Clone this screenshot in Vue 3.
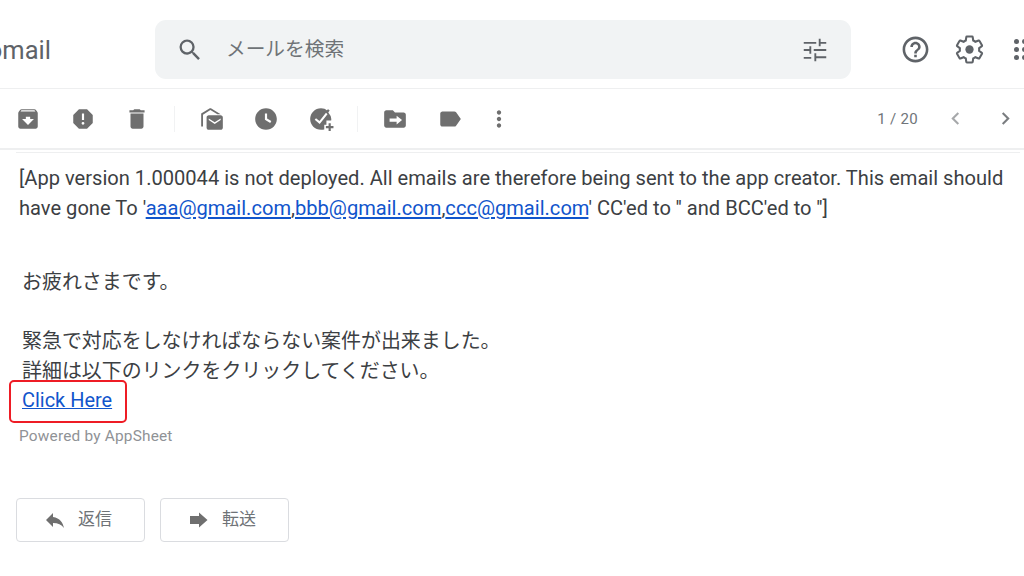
<template>
  <div class="page">
    <header class="topbar">
      <div class="logo"><span>omail</span></div>
      <div class="search">
        <svg class="search-icon" viewBox="0 0 24 24"><path d="M15.5 14h-.79l-.28-.27A6.471 6.471 0 0 0 16 9.5 6.5 6.5 0 1 0 9.5 16c1.61 0 3.09-.59 4.23-1.57l.27.28v.79l5 4.99L20.49 19l-4.99-5zm-6 0C7.01 14 5 11.99 5 9.5S7.01 5 9.5 5 14 7.01 14 9.5 11.99 14 9.5 14z" /></svg>
        <span class="search-text">メールを検索</span>
        <svg class="tune-icon" viewBox="0 0 24 24"><path d="M3 17.500v1.500h6v-1.500H3zM3 5.500V7h10V5.500H3zm10 15.500v-2.500h8V17h-8v-2.500h-1.500V21H13zM7.500 9v2.250H3v1.500h4.500V15H9V9H7.500zM21 12.750v-1.500H11v1.500h10zM15 9h1.500V7H21V5.500h-4.500V3H15v6z" /></svg>
      </div>
      <div class="top-actions">
        <svg class="top-icon help" viewBox="0 0 24 24"><path d="M11 18h2v-2h-2v2zm1-16C6.48 2 2 6.48 2 12s4.48 10 10 10 10-4.48 10-10S17.52 2 12 2zm0 18c-4.41 0-8-3.59-8-8s3.59-8 8-8 8 3.59 8 8-3.59 8-8 8zm0-14c-2.21 0-4 1.79-4 4h2c0-1.1.9-2 2-2s2 .9 2 2c0 2-3 1.75-3 5h2c0-2.25 3-2.5 3-5 0-2.21-1.79-4-4-4z" /></svg>
        <svg class="top-icon gear" viewBox="0 0 24 24">
          <path class="gear-line" d="M19.43 12.98c.04-.32.07-.64.07-.98s-.03-.66-.07-.98l2.11-1.65c.19-.15.24-.42.12-.64l-2-3.46c-.12-.22-.39-.3-.61-.22l-2.49 1c-.52-.4-1.08-.73-1.69-.98l-.38-2.65A.488.488 0 0 0 14 2h-4c-.25 0-.46.18-.49.42l-.38 2.65c-.61.25-1.17.59-1.69.98l-2.49-1c-.23-.09-.49 0-.61.22l-2 3.46c-.13.22-.07.49.12.64l2.11 1.65c-.04.32-.07.65-.07.98s.03.66.07.98l-2.11 1.65c-.19.15-.24.42-.12.64l2 3.46c.12.22.39.3.61.22l2.49-1c.52.4 1.08.73 1.69.98l.38 2.65c.03.24.24.42.49.42h4c.25 0 .46-.18.49-.42l.38-2.65c.61-.25 1.17-.59 1.69-.98l2.49 1c.23.09.49 0 .61-.22l2-3.46c.12-.22.07-.49-.12-.64l-2.11-1.65z" />
          <circle cx="12" cy="12" r="3.2" />
        </svg>
        <div class="apps"><i v-for="n in 9" :key="n"></i></div>
      </div>
    </header>

    <div class="toolbar">
      <template v-for="(item, i) in tools" :key="i">
        <span v-if="item === 'sep'" class="sep"></span>
        <button v-else class="tool" :class="{ narrow: item.narrow }">
          <svg viewBox="0 0 24 24"><path :d="item.d" fill-rule="evenodd" /></svg>
        </button>
      </template>
      <div class="pager">
        <span class="count">1 / 20</span>
        <svg class="chev prev" viewBox="0 0 24 24"><path d="M15.41 7.41 14 6l-6 6 6 6 1.41-1.41L10.83 12z" /></svg>
        <svg class="chev next" viewBox="0 0 24 24"><path d="M8.59 16.59 10 18l6-6-6-6-1.41 1.41L13.17 12z" /></svg>
      </div>
    </div>

    <main class="mail">
      <p class="notice">
        [App version 1.000044 is not deployed. All emails are therefore being sent to the app creator. This email should
        have gone To '<a href="#">aaa@gmail.com</a>,<a href="#">bbb@gmail.com</a>,<a href="#">ccc@gmail.com</a>' CC'ed to '' and BCC'ed to '']
      </p>
      <div class="message">
        <p>お疲れさまです。</p>
        <p class="blank">&nbsp;</p>
        <p>緊急で対応をしなければならない案件が出来ました。</p>
        <p>詳細は以下のリンクをクリックしてください。</p>
        <p class="link-line">
          <a href="#">Click Here</a>
          <span class="highlight"></span>
        </p>
      </div>
      <div class="powered">Powered by AppSheet</div>
      <div class="actions">
        <button class="action">
          <svg viewBox="0 0 24 24"><path d="M10 9V5l-7 7 7 7v-4.1c5 0 8.5 1.6 11 5.1-1-5-4-10-11-11z" /></svg>
          <span>返信</span>
        </button>
        <button class="action">
          <svg viewBox="0 0 24 24"><path d="M12 4.500 20.500 12 12 19.500V16H3V8h9z" /></svg>
          <span>転送</span>
        </button>
      </div>
    </main>
  </div>
</template>

<script setup>
const tools = [
  { d: 'M20.54 5.23 19.15 3.55C18.88 3.21 18.47 3 18 3H6c-.47 0-.88.21-1.16.55L3.46 5.23C3.17 5.57 3 6.02 3 6.5V19c0 1.1.9 2 2 2h14c1.1 0 2-.9 2-2V6.5c0-.48-.17-.93-.46-1.27zM12 17.5 6.5 12H10v-2h4v2h3.5L12 17.5zM5.12 5l.81-1h12l.94 1H5.12z' },
  { d: 'M15.73 3H8.27L3 8.27v7.46L8.27 21h7.46L21 15.73V8.27L15.73 3zM12 17.3c-.72 0-1.3-.58-1.3-1.3 0-.72.58-1.3 1.3-1.3.72 0 1.3.58 1.3 1.3 0 .72-.58 1.3-1.3 1.3zm1-4.3h-2V7h2v6z' },
  { d: 'M6 19c0 1.1.9 2 2 2h8c1.1 0 2-.9 2-2V7H6v12zM19 4h-3.5l-1-1h-5l-1 1H5v2h14V4z' },
  'sep',
  { d: 'M10 2 2 7v12h1.700V8l6.800-4.200L17 7.500h3L11 2h-1zM7 10.500V20c0 1.100.9 2 2 2h11c1.100 0 2-.9 2-2v-9.500c0-1.100-.9-2-2-2H9c-1.100 0-2 .9-2 2zm2 1 5.500 3.500 5.500-3.500V13l-5.500 3.500L9 13v-1.500z' },
  { d: 'M12 2C6.48 2 2 6.48 2 12s4.48 10 10 10 10-4.48 10-10S17.52 2 12 2zm-1 5h2v4.6l3.9 2.3-1 1.7L11 12.7V7z' },
  { d: 'M18.600 3 20 4.200l-1.300 1.700A10 10 0 0 1 21.500 12c0 .5 0 .9-.1 1.300H17v4h-2v4.300c-1 .3-2 .4-3 .4C6.480 22 2 17.520 2 12S6.480 2 12 2c2.400 0 4.500.8 5.200 1.900zM10.800 16.500 18 7.500 16.600 6.300l-6 7.600-3.200-2.700-1.200 1.400 4.600 3.900zM19 16v2.500h-2.500v2H19V23h2v-2.500h2.500v-2H21V16h-2z' },
  'sep',
  { d: 'M20 6h-8l-2-2H4c-1.100 0-2 .9-2 2v12c0 1.100.9 2 2 2h16c1.100 0 2-.9 2-2V8c0-1.100-.9-2-2-2zm-6.500 11v-2.500H7v-3h6.500V9l5 4-5 4z' },
  { d: 'M17.630 5.840C17.270 5.330 16.670 5 16 5L5 5.010C3.900 5.010 3 5.900 3 7v10c0 1.100.9 1.990 2 1.990L16 19c.67 0 1.270-.33 1.630-.84L22 12l-4.370-6.160z' },
  { narrow: true, d: 'M12 8c1.100 0 2-.9 2-2s-.9-2-2-2-2 .9-2 2 .9 2 2 2zm0 2c-1.100 0-2 .9-2 2s.9 2 2 2 2-.9 2-2-.9-2-2-2zm0 6c-1.100 0-2 .9-2 2s.9 2 2 2 2-.9 2-2-.9-2-2-2z' }
]
</script>

<style scoped>
.page {
  width: 1024px;
  height: 576px;
  overflow: hidden;
  background: #fff;
  font-family: Roboto, "Noto Sans CJK JP", sans-serif;
  color: #3c4043;
}

.topbar {
  height: 88px;
  display: flex;
  align-items: flex-start;
  border-bottom: 1px solid #eeeff0;
}

.logo {
  width: 155px;
  height: 88px;
  display: flex;
  align-items: center;
  justify-content: flex-end;
  box-sizing: border-box;
  padding: 12px 104px 0 0;
  font-size: 25.500px;
  color: #5f6368;
  flex: none;
}

.search {
  width: 696px;
  height: 59px;
  margin-top: 20px;
  background: #f1f3f4;
  border-radius: 11px;
  display: flex;
  align-items: center;
  flex: none;
  box-sizing: border-box;
  padding: 0 21px 0 21px;
}

.search-icon {
  width: 28px;
  height: 28px;
  fill: #5f6368;
}

.search-text {
  margin-left: 22px;
  font-size: 19.700px;
  color: #6f7377;
  flex: 1;
  margin-top: -4px;
}

.tune-icon {
  width: 30px;
  height: 30px;
  fill: #5f6368;
}

.top-actions {
  display: flex;
  align-items: center;
  height: 98px;
  padding-left: 49px;
  flex: none;
}

.top-icon {
  width: 31px;
  height: 31px;
  fill: #5f6368;
  flex: none;
}

.gear {
  margin-left: 23px;
}

.gear-line {
  fill: none;
  stroke: #5f6368;
  stroke-width: 1.600;
}

.apps {
  display: grid;
  grid-template-columns: repeat(3, 5px);
  gap: 3px;
  margin-left: 29px;
  flex: none;
}

.apps i {
  width: 5px;
  height: 5px;
  border-radius: 50%;
  background: #5f6368;
}

.toolbar {
  height: 59px;
  display: flex;
  align-items: center;
  padding-left: 1px;
  border-bottom: 2px solid #eeeff0;
}

.tool {
  width: 54.5px;
  height: 40px;
  flex: none;
  padding: 0;
  border: none;
  background: none;
  display: flex;
  align-items: center;
  justify-content: center;
}

.tool.narrow {
  width: 44px;
}

.tool svg {
  width: 26px;
  height: 26px;
  fill: #6f6f6f;
}

.sep {
  width: 1px;
  height: 26px;
  background: #f1f2f3;
  flex: none;
  margin: 0 10px 0 9px;
}

.pager {
  margin-left: auto;
  display: flex;
  align-items: center;
}

.count {
  font-size: 15px;
  color: #70757a;
  letter-spacing: 0.3px;
  margin-right: 25px;
}

.chev {
  width: 25px;
  height: 25px;
}

.prev {
  fill: #a6a8aa;
  margin-right: 25px;
}

.next {
  fill: #7a7d80;
  margin-right: 6px;
}

.mail {
  margin: 2px 4px 0 16px;
  border-top: 1px solid #eeeff0;
}

.notice {
  margin: 10px 0 0 3px;
  font-size: 20.100px;
  line-height: 30px;
  white-space: pre-line;
  width: 1005px;
}

a {
  color: #1155cc;
}

.message {
  margin: 45px 0 0 6px;
  font-size: 19.950px;
  line-height: 29.6px;
}

.message p {
  margin: 0;
}

.link-line {
  position: relative;
}

.highlight {
  position: absolute;
  left: -13px;
  top: -6px;
  width: 118px;
  height: 43px;
  box-sizing: border-box;
  border: 2.500px solid #ee1c25;
  border-radius: 5px;
}

.powered {
  margin: 10px 0 0 3px;
  font-size: 15.400px;
  line-height: 20px;
  letter-spacing: 0.2px;
  color: #8f9296;
}

.actions {
  display: flex;
  gap: 15px;
  margin-top: 52px;
}

.action {
  width: 129px;
  height: 44px;
  border: 1px solid #dadce0;
  border-radius: 4px;
  background: #fff;
  display: flex;
  align-items: center;
  justify-content: center;
  gap: 11px;
  padding: 0 6px 0 0;
  font-family: Roboto, "Noto Sans CJK JP", sans-serif;
  font-size: 17px;
  color: #6f7377;
}

.action span {
  margin-top: -4px;
}

.action svg {
  width: 24px;
  height: 24px;
  fill: #6f6f6f;
}
</style>
